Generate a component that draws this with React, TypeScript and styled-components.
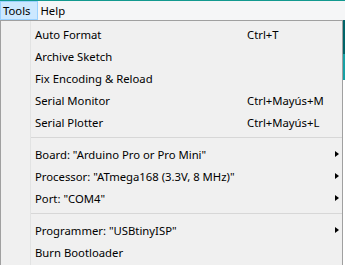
import React from 'react'
import styled, { createGlobalStyle } from 'styled-components'

const GlobalStyle = createGlobalStyle`
  html, body {
    margin: 0;
    padding: 0;
    background: #ffffff;
    overflow: hidden;
  }
  body {
    font-family: 'Segoe UI', 'Noto Sans', 'Open Sans', sans-serif;
    font-size: 11.3px;
    color: #000;
  }
`

const Window = styled.div`
  width: 345px;
  height: 265px;
  display: flex;
  flex-direction: column;
  border-top: 1px solid #12998f;
  box-sizing: border-box;
  background: #ffffff;
`

const MenuBar = styled.div`
  height: 19px;
  display: flex;
  align-items: stretch;
  background: #f5f6f7;
`

const MenuTitle = styled.div<{ $open?: boolean }>`
  display: flex;
  align-items: center;
  padding: 0 6px 0 2px;
  box-sizing: border-box;
  line-height: 1;
  background: ${(p) => (p.$open ? '#cce8ff' : 'transparent')};
  border: 1px solid ${(p) => (p.$open ? '#99d1ff' : 'transparent')};
`

const Body = styled.div`
  flex: 1;
  display: flex;
`

const Dropdown = styled.div`
  width: 343px;
  box-sizing: border-box;
  border: 1px solid #a0a0a0;
  border-bottom: none;
  background: #f0f0f0;
  padding-top: 2px;
  display: flex;
  flex-direction: column;
  background-image: linear-gradient(#e2e3e3, #e2e3e3);
  background-size: 1px 100%;
  background-position: 29px 0;
  background-repeat: no-repeat;
`

const Backdrop = styled.div`
  flex: 1;
  display: flex;
  flex-direction: column;
`

const Toolbar = styled.div`
  height: 34px;
  background: #006468;
`

const TabStrip = styled.div`
  height: 26px;
  background: #17a1a5;
`

const Editor = styled.div`
  flex: 1;
  background: #ffffff;
`

const Item = styled.div`
  height: 22px;
  display: grid;
  grid-template-columns: 34px 212px 88px 4px 3px;
  align-items: center;
  white-space: nowrap;
`

const Label = styled.span`
  grid-column: 2;
  overflow: visible;
`

const Shortcut = styled.span`
  grid-column: 3;
`

const Arrow = styled.span`
  grid-column: 4;
  width: 0;
  height: 0;
  border-left: 4px solid #000;
  border-top: 3.5px solid transparent;
  border-bottom: 3.5px solid transparent;
`

const Separator = styled.div`
  height: 10px;
  display: flex;
  align-items: flex-start;
  padding: 4px 0 0 30px;
  box-sizing: border-box;

  &::after {
    content: '';
    flex: 1;
    height: 1px;
    background: #d7d7d7;
  }
`

type Entry =
  | { kind: 'item'; label: string; shortcut?: string; sub?: boolean }
  | { kind: 'sep' }

const entries: Entry[] = [
  { kind: 'item', label: 'Auto Format', shortcut: 'Ctrl+T' },
  { kind: 'item', label: 'Archive Sketch' },
  { kind: 'item', label: 'Fix Encoding & Reload' },
  { kind: 'item', label: 'Serial Monitor', shortcut: 'Ctrl+Mayús+M' },
  { kind: 'item', label: 'Serial Plotter', shortcut: 'Ctrl+Mayús+L' },
  { kind: 'sep' },
  { kind: 'item', label: 'Board: "Arduino Pro or Pro Mini"', sub: true },
  { kind: 'item', label: 'Processor: "ATmega168 (3.3V, 8 MHz)"', sub: true },
  { kind: 'item', label: 'Port: "COM4"', sub: true },
  { kind: 'sep' },
  { kind: 'item', label: 'Programmer: "USBtinyISP"', sub: true },
  { kind: 'item', label: 'Burn Bootloader' },
]

export default function App(): React.ReactElement {
  return (
    <>
      <GlobalStyle />
      <Window>
        <MenuBar>
          <MenuTitle $open>Tools</MenuTitle>
          <MenuTitle>Help</MenuTitle>
        </MenuBar>
        <Body>
          <Dropdown>
            {entries.map((e, i) =>
              e.kind === 'sep' ? (
                <Separator key={i} />
              ) : (
                <Item key={i}>
                  <Label>{e.label}</Label>
                  {e.shortcut && <Shortcut>{e.shortcut}</Shortcut>}
                  {e.sub && <Arrow />}
                </Item>
              )
            )}
          </Dropdown>
          <Backdrop>
            <Toolbar />
            <TabStrip />
            <Editor />
          </Backdrop>
        </Body>
      </Window>
    </>
  )
}
